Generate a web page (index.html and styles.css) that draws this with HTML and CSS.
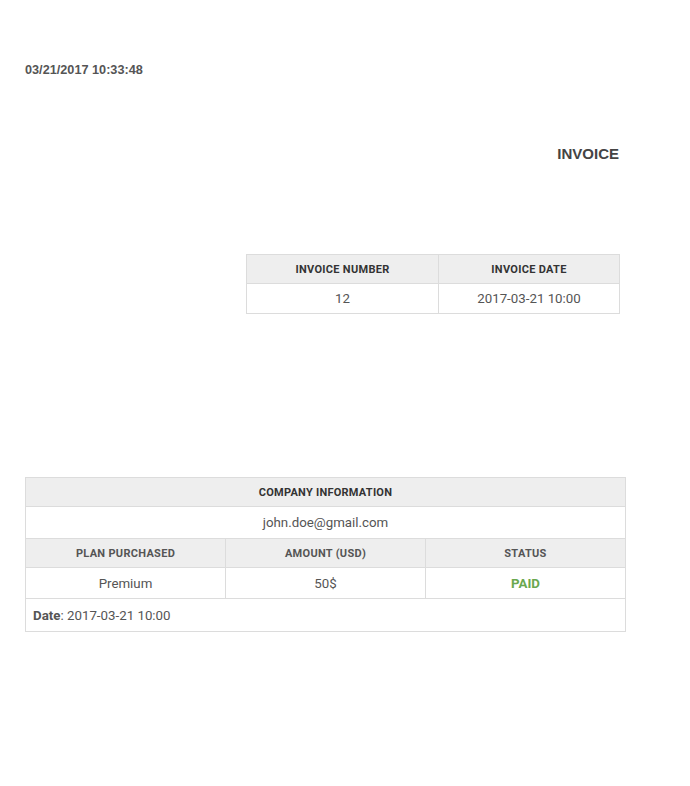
FILE: index.html
```html
<!DOCTYPE html>
<html>
<head>
<meta charset="utf-8">
<link rel="stylesheet" href="styles.css">
</head>
<body>
<div class="page">
  <div class="stamp">03/21/2017 10:33:48</div>
  <div class="title-row"><h1 class="title">INVOICE</h1></div>
  <div class="meta-row">
    <table class="tbl meta">
      <tr class="head"><th class="c1">INVOICE NUMBER</th><th>INVOICE DATE</th></tr>
      <tr><td>12</td><td>2017-03-21 10:00</td></tr>
    </table>
  </div>
  <table class="tbl info">
    <tr class="head"><th colspan="3">COMPANY INFORMATION</th></tr>
    <tr class="email"><td colspan="3">john.doe@gmail.com</td></tr>
    <tr class="head sub"><th>PLAN PURCHASED</th><th>AMOUNT (USD)</th><th>STATUS</th></tr>
    <tr class="vals"><td>Premium</td><td>50$</td><td class="paid">PAID</td></tr>
    <tr class="date"><td colspan="3"><b>Date</b>: 2017-03-21 10:00</td></tr>
  </table>
</div>
</body>
</html>
```
FILE: styles.css
```css
html, body { margin: 0; padding: 0; background: #fff; }
body { font-family: Roboto, "Noto Sans", sans-serif; color: #555; }
.page { width: 601px; padding: 62px 0 0 25px; }
.stamp { font-family: "Liberation Sans", Arial, sans-serif; font-size: 12.7px; font-weight: bold; line-height: 16px; color: #555; }
.title-row { display: flex; justify-content: flex-end; padding-right: 7px; margin-top: 67px; }
.title { margin: 0; font-family: "Liberation Sans", Arial, sans-serif; font-size: 15px; line-height: 18px; font-weight: bold; color: #444; }
.meta-row { display: flex; justify-content: flex-end; padding-right: 6px; margin-top: 91px; }
.tbl { border-collapse: collapse; }
.tbl th, .tbl td { border: 1px solid #dcdcdc; text-align: center; padding: 0; }
.tbl .head th { background: #eee; font-size: 11px; font-weight: bold; color: #333; height: 28px; letter-spacing: 0.3px; }
.tbl td { font-size: 13.3px; color: #555; height: 29px; }
.meta .c1 { width: 191px; }
.meta th + th { width: 180px; }
.meta td { height: 29px; }
.info { width: 601px; margin-top: 163px; table-layout: fixed; }
.info .head th { letter-spacing: 0.25px; }
.info .email td { height: 31px; }
.info .sub th { color: #555; letter-spacing: 0.3px; }
.info .vals td { height: 30px; }
.info .paid { color: #6aa84f; font-weight: bold; }
.info .date td { text-align: left; padding-left: 7px; height: 32px; }
.info .date b { color: #555; }
```
